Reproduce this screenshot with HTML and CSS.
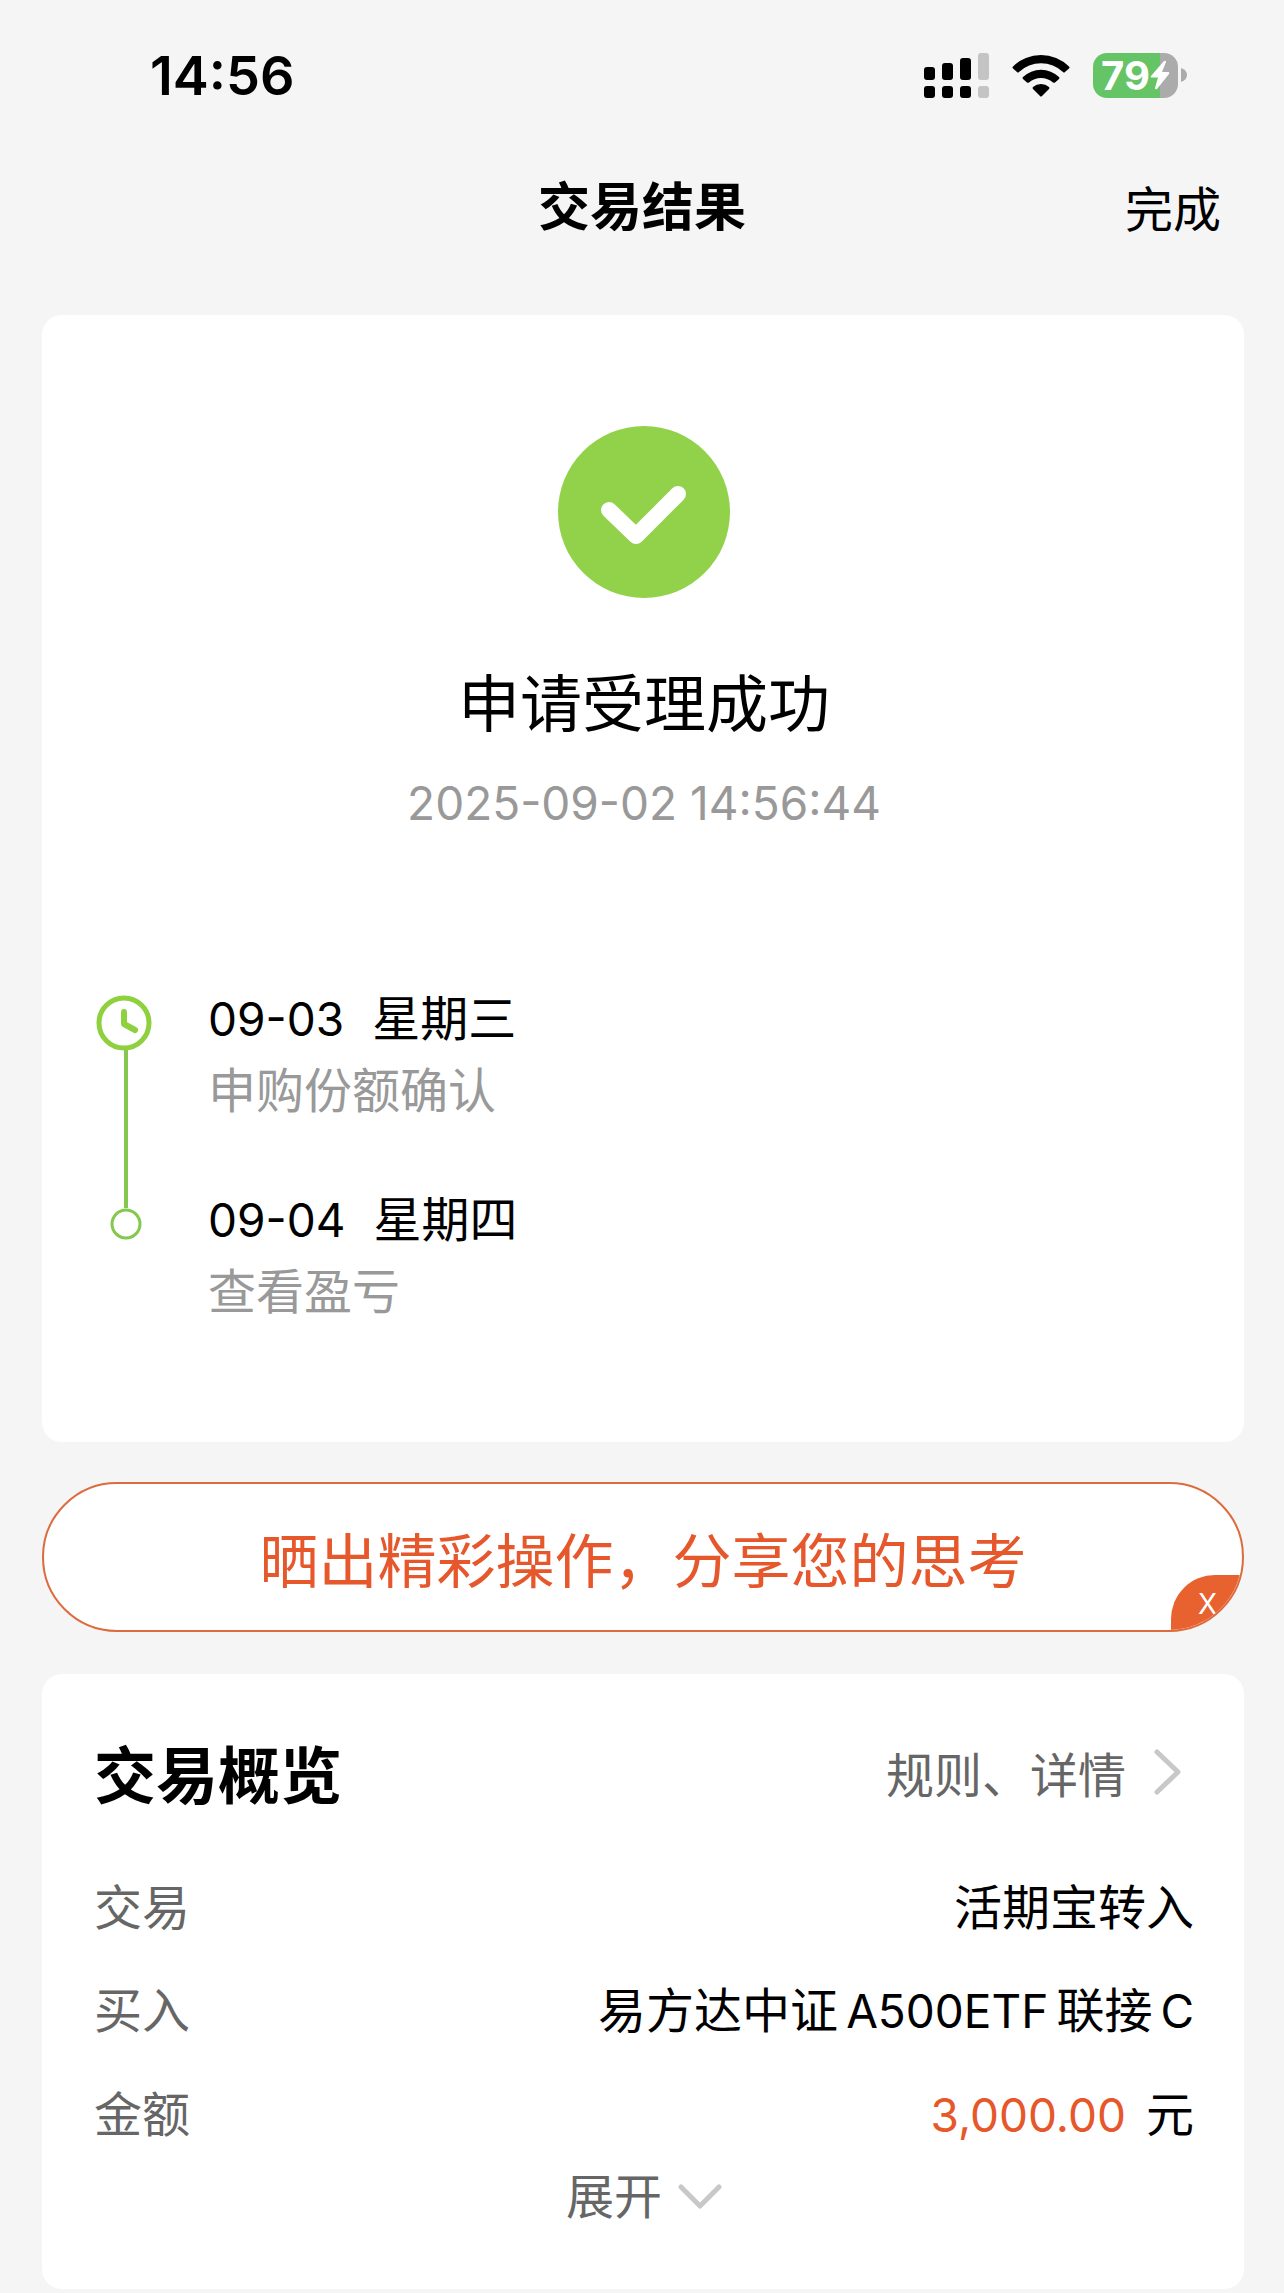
FILE: index.html
```html
<!DOCTYPE html>
<html lang="zh-CN">
<head>
    <meta charset="UTF-8">
    <meta name="viewport" content="width=device-width, initial-scale=1.0">
    <title>交易结果</title>
    <link rel="stylesheet" href="styles.css">
</head>
<body>
    <div class="status-bar">
        <span class="time">14:56</span>
        <div class="status-icons">
            <svg class="signal" width="65" height="45" viewBox="0 0 65 45">
                <rect x="0" y="14" width="11" height="13" rx="3"/>
                <rect x="18" y="10" width="11" height="17" rx="3"/>
                <rect x="36" y="5" width="11" height="22" rx="3"/>
                <rect class="dim" x="54" y="0" width="11" height="27" rx="3"/>
                <rect x="0" y="33" width="11" height="12" rx="3"/>
                <rect x="18" y="33" width="11" height="12" rx="3"/>
                <rect x="36" y="33" width="11" height="12" rx="3"/>
                <rect class="dim" x="54" y="33" width="11" height="12" rx="3"/>
            </svg>
            <svg class="wifi" width="58" height="43" viewBox="0 0 58 43">
                <path d="M1 12.5 Q0 13.5 1 14.5 L5 18 Q6 19 7 18 A32 32 0 0 1 51 18 Q52 19 53 18 L57 14.5 Q58 13.5 57 12.5 A40 40 0 0 0 1 12.5 Z"/>
                <path d="M11 23 Q10 24 11 25 L15 28.5 Q16 29 17 28.5 A18 18 0 0 1 41 28.5 Q42 29 43 28.5 L47 25 Q48 24 47 23 A26 26 0 0 0 11 23 Z"/>
                <path d="M21 33 Q20 34 21 35 L28 42 Q29 43 30 42 L37 35 Q38 34 37 33 A12 12 0 0 0 21 33 Z"/>
            </svg>
            <div class="battery">
                <div class="battery-body">
                    <span>79</span>
                    <svg width="20" height="30" viewBox="0 0 20 30">
                        <path d="M14 1 L1 16 Q0 17.5 2 17.5 H8 L5 28 Q5 30 7 29 L19 14 Q20 12 18 12 H12 L16 2 Q16 0 14 1 Z"/>
                    </svg>
                </div>
                <svg width="6" height="14" viewBox="0 0 6 14"><path d="M0 0 Q6 2 6 7 Q6 12 0 14 Z"/></svg>
            </div>
        </div>
    </div>

    <header class="nav-bar">
        <h1>交易结果</h1>
        <button class="done" type="button">完成</button>
    </header>

    <main class="content">
        <section class="card result">
            <svg class="success-icon" width="172" height="172" viewBox="0 0 172 172">
                <circle cx="86" cy="86" r="86"/>
                <path d="M51 84 L78 110 L120 68"/>
            </svg>
            <h2>申请受理成功</h2>
            <p class="result-time num">2025-09-02 14:56:44</p>

            <div class="timeline">
                <svg class="timeline-line" width="56" height="246" viewBox="0 0 56 246">
                    <path class="line" d="M30 54 V213"/>
                    <circle class="clock" cx="28" cy="28" r="25"/>
                    <path class="hands" d="M28 17 V29 L39 35"/>
                    <circle class="dot" cx="30" cy="229" r="14"/>
                </svg>
                <ul class="steps">
                    <li>
                        <div class="step-date"><span class="num">09-03</span><span>星期三</span></div>
                        <div class="step-text">申购份额确认</div>
                    </li>
                    <li>
                        <div class="step-date"><span class="num">09-04</span><span>星期四</span></div>
                        <div class="step-text">查看盈亏</div>
                    </li>
                </ul>
            </div>
        </section>

        <div class="share">
            <button class="share-btn" type="button">晒出精彩操作，分享您的思考</button>
            <button class="share-close" type="button">X</button>
        </div>

        <section class="card overview">
            <div class="overview-head">
                <h2>交易概览</h2>
                <a href="#" class="rules">规则、详情
                    <svg width="28" height="46" viewBox="0 0 28 46"><path d="M3 3 L24 23 L3 43"/></svg>
                </a>
            </div>
            <dl class="rows">
                <div class="row"><dt>交易</dt><dd>活期宝转入</dd></div>
                <div class="row"><dt>买入</dt><dd class="fund"><span>易方达中证</span><span class="num">A500ETF</span><span>联接</span><span class="num">C</span></dd></div>
                <div class="row"><dt>金额</dt><dd class="money"><span class="amount num">3,000.00</span><span>元</span></dd></div>
            </dl>
            <button class="expand" type="button">展开
                <svg width="44" height="26" viewBox="0 0 44 26"><path d="M3 3 L22 22 L41 3"/></svg>
            </button>
        </section>
    </main>
</body>
</html>
```
FILE: styles.css
```css
* {
    box-sizing: border-box;
}

body {
    margin: 0;
    background: #f5f5f5;
    color: #000;
    font-family: Inter, "Noto Sans CJK SC", sans-serif;
    font-size: 48px;
}

h1, h2, p, ul, dl, dd {
    margin: 0;
    padding: 0;
}

ul {
    list-style: none;
}

button {
    font: inherit;
    color: inherit;
    background: none;
    border: none;
    padding: 0;
    cursor: pointer;
}

/* digits and latin letters */
.num {
    font-size: 46px;
}

/* status bar */
.status-bar {
    display: flex;
    justify-content: space-between;
    align-items: center;
    height: 150px;
    padding: 0 97px 0 150px;
}

.time {
    font-size: 54px;
    font-weight: 600;
}

.status-icons {
    display: flex;
    align-items: center;
    gap: 23px;
}

.signal .dim {
    fill: #c4c4c4;
}

.battery {
    display: flex;
    align-items: center;
    gap: 3px;
}

.battery > svg {
    fill: #ababab;
}

.battery-body {
    display: flex;
    align-items: center;
    justify-content: center;
    width: 85px;
    height: 45px;
    border-radius: 14px;
    background: linear-gradient(to right, #65c466 79%, #ababab 79%);
    color: #fff;
    font-size: 40px;
    font-weight: 700;
    line-height: 45px;
}

.battery-body svg {
    fill: #fff;
}

/* navigation */
.nav-bar {
    display: grid;
    grid-template-columns: 1fr auto 1fr;
    align-items: center;
    height: 112px;
    padding: 0 63px;
}

.nav-bar h1 {
    grid-column: 2;
    padding-bottom: 6px;
    font-size: 52px;
    font-weight: 700;
}

.done {
    justify-self: end;
}

/* cards */
.content {
    display: flex;
    flex-direction: column;
    padding: 53px 40px 4px 42px;
}

.card {
    background: #fff;
    border-radius: 20px;
}

.result {
    display: flex;
    flex-direction: column;
    align-items: center;
    padding: 111px 52px 114px 54px;
}

.success-icon {
    fill: #92d14a;
}

.success-icon path {
    fill: none;
    stroke: #fff;
    stroke-width: 16;
    stroke-linecap: round;
    stroke-linejoin: round;
}

.result h2 {
    margin-top: 65px;
    font-size: 62px;
    font-weight: 400;
    line-height: 84px;
}

.result-time {
    margin-top: 26px;
    color: #999;
    line-height: 60px;
}

.timeline {
    display: flex;
    align-self: stretch;
    align-items: flex-start;
    gap: 56px;
    margin-top: 150px;
}

.timeline-line {
    margin-top: 12px;
    fill: none;
    stroke: #8fd03f;
}

.timeline-line .line {
    stroke: #85c84f;
    stroke-width: 4;
}

.timeline-line .clock {
    stroke-width: 5;
}

.timeline-line .hands {
    stroke-width: 6;
    stroke-linecap: round;
    stroke-linejoin: round;
}

.timeline-line .dot {
    stroke: #85c84f;
    stroke-width: 3;
}

.steps {
    display: flex;
    flex-direction: column;
    gap: 57px;
    line-height: 72px;
}

.step-date {
    display: flex;
    align-items: baseline;
    gap: 28px;
}

.step-text {
    color: #999;
}

/* share banner */
.share {
    position: relative;
    display: flex;
    height: 150px;
    margin: 40px 0 42px;
    background: #fff;
    border: 2px solid #dc6b3d;
    border-radius: 75px;
    overflow: hidden;
}

.share-btn {
    flex: 1;
    color: #e6572b;
    font-size: 59px;
}

.share-close {
    position: absolute;
    right: -2px;
    bottom: -2px;
    width: 73px;
    height: 57px;
    background: #e8622f;
    border-top-left-radius: 44px;
    color: #fff;
    font-size: 28px;
}

/* overview */
.overview {
    display: flex;
    flex-direction: column;
    padding: 53px 50px 62px 52px;
}

.overview-head {
    display: flex;
    justify-content: space-between;
    align-items: center;
    height: 90px;
    padding-right: 12px;
}

.overview-head h2 {
    font-size: 62px;
    font-weight: 700;
}

.rules {
    display: flex;
    align-items: center;
    gap: 28px;
    color: #666;
    text-decoration: none;
}

.overview svg {
    fill: none;
    stroke: #c8c8c8;
    stroke-width: 5;
    stroke-linecap: round;
    stroke-linejoin: round;
}

.rows {
    margin-top: 39px;
}

.row {
    display: flex;
    justify-content: space-between;
    line-height: 103px;
}

.row dt {
    color: #666;
}

.fund {
    display: flex;
    align-items: baseline;
    gap: 8px;
}

.money {
    display: flex;
    align-items: baseline;
    gap: 20px;
}

.amount {
    color: #e6572b;
}

.expand {
    display: flex;
    align-self: center;
    align-items: center;
    gap: 16px;
    color: #666;
    line-height: 60px;
}
```
